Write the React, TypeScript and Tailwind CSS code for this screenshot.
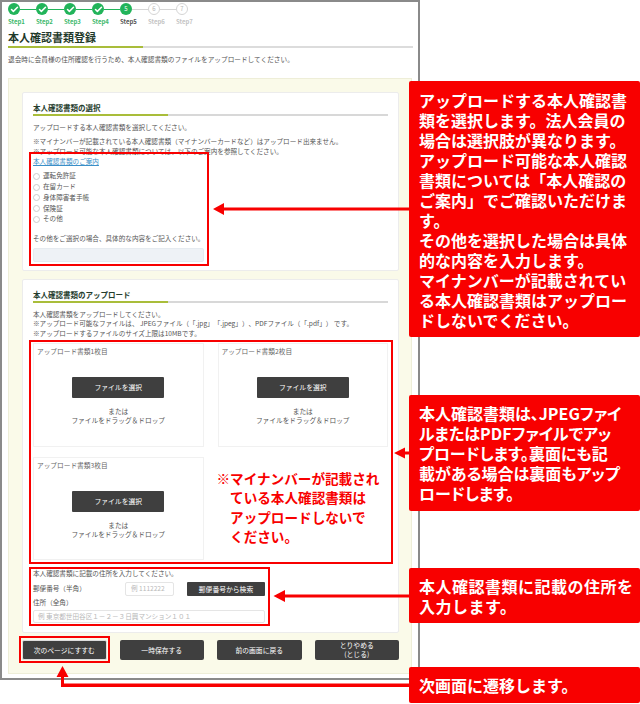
import { Check } from "lucide-react";

const steps = [1, 2, 3, 4, 5, 6, 7];
const idTypes = ["運転免許証", "在留カード", "身体障害者手帳", "保険証", "その他"];
const actions = ["次のページにすすむ", "一時保存する", "前の画面に戻る"];

const callout1 = [
  "アップロードする本人確認書",
  "類を選択します。法人会員の",
  "場合は選択肢が異なります。",
  "アップロード可能な本人確認",
  "書類については「本人確認の",
  "ご案内」でご確認いただけま",
  "す。",
  "その他を選択した場合は具体",
  "的な内容を入力します。",
  "マイナンバーが記載されてい",
  "る本人確認書類はアップロー",
  "ドしないでください。",
];

function StepCircle({ n }: { n: number }) {
  if (n < 5) {
    return (
      <div className="w-[12px] h-[12px] rounded-full bg-[#22b45a] flex items-center justify-center">
        <Check size={9} strokeWidth={4} className="text-white" />
      </div>
    );
  }
  if (n === 5) {
    return (
      <div className="w-[12px] h-[12px] rounded-full bg-[#22b45a] flex items-center justify-center text-[6px] leading-none text-white">
        5
      </div>
    );
  }
  return (
    <div className="w-[12px] h-[12px] rounded-full bg-white border border-[#d5d5d5] flex items-center justify-center text-[6px] leading-none text-[#b5b5b5]">
      {n}
    </div>
  );
}

function Stepper() {
  return (
    <div className="ml-[6px] mt-[1px]">
      <div className="flex items-center">
        {steps.map((n) => (
          <div key={n} className="flex items-center">
            <StepCircle n={n} />
            {n < 7 && <div className={n < 5 ? "w-[16px] h-px bg-[#22b45a]" : "w-[16px] h-px bg-[#d5d5d5]"} />}
          </div>
        ))}
      </div>
      <div className="flex mt-[3px]">
        {steps.map((n) => (
          <div
            key={n}
            className={
              "w-[28px] text-[6px] leading-[8px] font-bold " +
              (n < 5 ? "text-[#3cb96c]" : n === 5 ? "text-[#555555]" : "text-[#c4c4c4]")
            }
          >
            Step{n}
          </div>
        ))}
      </div>
    </div>
  );
}

function CardHeading({ children }: { children: React.ReactNode }) {
  return (
    <div>
      <div className="text-[7.5px] leading-[10px] font-bold text-[#243c2c]">{children}</div>
      <div className="mt-px flex h-[2px] bg-[#d8d8d8]">
        <div className="w-[135px] bg-[#a9bd3a]" />
      </div>
    </div>
  );
}

function UploadBox({ title, className }: { title: string; className: string }) {
  return (
    <div className={"border border-[#f1f1f1] px-[3px] pt-[2px] flex flex-col items-center " + className}>
      <div className="self-start text-[6.7px] leading-[10px] text-[#666666]">{title}</div>
      <div className="mt-[21px] w-[92px] h-[21px] bg-[#3f3f3f] rounded-[1px] flex items-center justify-center text-[6.8px] text-white">
        ファイルを選択
      </div>
      <div className="mt-[9px] text-[6.7px] leading-[9.5px] text-[#555555] text-center">
        または
        <br />
        ファイルをドラッグ＆ドロップ
      </div>
    </div>
  );
}

function Overlays() {
  return (
    <>
      <div className="absolute left-[29px] top-[152px] w-[180px] h-[114px] border-2 border-[#f80000]" />
      <div className="absolute left-[29px] top-[340px] w-[364px] h-[224px] border-2 border-[#f80000]" />
      <div className="absolute left-[29px] top-[567px] w-[241px] h-[59px] border-2 border-[#f80000]" />
      <div className="absolute left-[19px] top-[636px] w-[91px] h-[27px] border-2 border-[#f80000]" />

      <svg className="absolute left-0 top-0" width="640" height="704" viewBox="0 0 640 704">
        <g fill="#f80000">
          <path d="M213 209 L224 203 L224 207.5 L410 207.5 L410 210.5 L224 210.5 L224 215 Z" />
          <path d="M394 453 L405 447.5 L405 451.5 L410 451.5 L410 454.5 L405 454.5 L405 458.5 Z" />
          <path d="M273.500 596 L285 590 L285 594.500 L410 594.500 L410 597.500 L285 597.500 L285 602 Z" />
          <path d="M62.500 666 L68.500 677 L64 677 L64 683.500 L410 683.500 L410 687 L61 687 L61 677 L56.500 677 Z" />
        </g>
      </svg>

      <div className="absolute left-[409px] top-[81px] w-[231px] h-[256px] bg-[#f80000] rounded-[2px] pl-[10px] pt-[9px] text-[16px] leading-[20px] font-bold text-white whitespace-nowrap">
        {callout1.map((line) => (
          <div key={line}>{line}</div>
        ))}
      </div>
      <div className="absolute left-[409px] top-[395px] w-[231px] h-[116px] bg-[#f80000] rounded-[2px] pl-[10px] flex items-center text-[16px] leading-[20px] font-bold text-white whitespace-nowrap [font-feature-settings:'palt']">
        <div>
          本人確認書類は、JPEGファイ
          <br />
          ルまたはPDFファイルでアッ
          <br />
          プロードします。裏面にも記
          <br />
          載がある場合は裏面もアップ
          <br />
          ロードします。
        </div>
      </div>
      <div className="absolute left-[409px] top-[568px] w-[231px] h-[55px] bg-[#f80000] rounded-[2px] pl-[10px] flex items-center text-[16px] tracking-[0.5px] leading-[20px] font-bold text-white whitespace-nowrap">
        <div>
          本人確認書類に記載の住所を
          <br />
          入力します。
        </div>
      </div>
      <div className="absolute left-[409px] top-[667px] w-[231px] h-[36px] bg-[#f80000] rounded-[2px] pl-[10px] flex items-center text-[16px] leading-[20px] font-bold text-white whitespace-nowrap">
        次画面に遷移します。
      </div>
    </>
  );
}

export default function App() {
  return (
    <div
      className="relative w-[640px] h-[704px] bg-white overflow-hidden text-[#555555]"
      style={{ fontFamily: '"Noto Sans CJK JP", "Noto Sans", sans-serif' }}
    >
      <div className="w-[420px] h-[680px] border-2 border-[#8a8a8a]">
        <Stepper />

        <div className="ml-[6px] mr-[5px]">
          <div className="mt-[4px] text-[11px] leading-[14px] font-bold text-[#1f3a2b]">本人確認書類登録</div>
          <div className="mt-[2px] flex h-[2px] bg-[#dcdcdc]">
            <div className="w-[135px] bg-[#a9bd3a]" />
          </div>
          <div className="mt-[6px] text-[6.67px] leading-[10px]">
            退会時に会員様の住所確認を行うため、本人確認書類のファイルをアップロードしてください。
          </div>
        </div>

        <div className="ml-[6px] mt-[14px] w-[404px] border border-[#eeeed8] bg-[#fafae9] px-[13px] pt-[13px] pb-[13px] flex flex-col">
          <div className="w-[377px] h-[179px] border border-[#ececec] rounded-[2px] bg-white px-[10px] pt-[10px]">
            <CardHeading>本人確認書類の選択</CardHeading>
            <div className="mt-[6px] text-[6.6px] leading-[10px]">アップロードする本人確認書類を選択してください。</div>
            <div className="mt-[5px] text-[6.6px] leading-[9.5px] whitespace-nowrap">
              ※マイナンバーが記載されている本人確認書類（マイナンバーカードなど）はアップロード出来ません。
              <br />
              ※アップロード可能な本人確認書類については、以下のご案内を参照してください。
            </div>
            <div className="text-[6.6px] leading-[10px] text-[#3a8fc8] underline">本人確認書類のご案内</div>
            <div className="mt-[5px]">
              {idTypes.map((t) => (
                <div key={t} className="h-[10.75px] flex items-center gap-[3px] text-[6.6px]">
                  <div className="w-[7px] h-[7px] rounded-full border border-[#cccccc] bg-white" />
                  {t}
                </div>
              ))}
            </div>
            <div className="mt-[8px] text-[6.6px] leading-[10px]">その他をご選択の場合、具体的な内容をご記入ください。</div>
            <div className="mt-[5px] w-[171px] h-[14px] rounded-[2px] border border-[#e6ebf0] bg-[#eef2f6]" />
          </div>

          <div className="mt-[8px] w-[377px] h-[354px] border border-[#ececec] rounded-[2px] bg-white px-[10px] pt-[10px]">
            <CardHeading>本人確認書類のアップロード</CardHeading>
            <div className="mt-[6.5px] text-[6.6px] leading-[9.75px] whitespace-nowrap [text-spacing-trim:space-all]">
              本人確認書類をアップロードしてください。
              <br />
              ※アップロード可能なファイルは、 JPEGファイル（「.jpg」「.jpeg」）、PDFファイル（「.pdf」） です。
              <br />
              ※アップロードするファイルのサイズ上限は10MBです。
            </div>
            <div className="mt-[4px] grid grid-cols-2 gap-x-[14px] gap-y-[10px]">
              <UploadBox title="アップロード書類1枚目" className="h-[104px]" />
              <UploadBox title="アップロード書類2枚目" className="h-[104px]" />
              <UploadBox title="アップロード書類3枚目" className="h-[103px]" />
              <div className="flex pt-[12px] -ml-[1px] text-[13.6px] leading-[19.5px] font-bold text-[#f80000] whitespace-nowrap">
                <span className="w-[13.6px]">※</span>
                <div>
                  マイナンバーが記載され
                  <br />
                  ている本人確認書類は
                  <br />
                  アップロードしないで
                  <br />
                  ください。
                </div>
              </div>
            </div>
            <div className="mt-[8px] w-[232px]">
              <div className="text-[6.6px] leading-[10px]">本人確認書類に記載の住所を入力してください。</div>
              <div className="mt-[4px] flex items-center h-[14px] text-[6.6px]">
                <div className="w-[92px]">郵便番号（半角）</div>
                <div className="w-[49px] h-[14px] rounded-[2px] border border-[#e5e5e5] pl-[5px] flex items-center text-[6.6px] text-[#b8b8b8]">
                  例 1112222
                </div>
                <div className="ml-[13px] w-[78px] h-[14px] rounded-[1px] bg-[#3f3f3f] flex items-center justify-center text-[6.8px] text-white">
                  郵便番号から検索
                </div>
              </div>
              <div className="mt-px text-[6.6px] leading-[10px]">住所（全角）</div>
              <div className="mt-[3px] h-[13.5px] rounded-[2px] border border-[#e5e5e5] pl-[4px] flex items-center text-[6.6px] text-[#b8b8b8] whitespace-nowrap">
                例 東京都世田谷区１－２－３日興マンション１０１
              </div>
            </div>
          </div>

          <div className="mt-[7px] w-[377px] grid grid-cols-4 gap-x-[13px]">
            {actions.map((a, i) => (
              <div
                key={a}
                className={
                  "h-[20px] rounded-[2px] bg-[#3f3f3f] flex items-center justify-center text-[6.8px] text-white " +
                  (i === 0 ? "border border-[#dddddd]" : "")
                }
              >
                {a}
              </div>
            ))}
            <div className="h-[20px] rounded-[2px] bg-[#3f3f3f] flex items-center justify-center text-center text-[6.8px] leading-[9px] text-white">
              <div>
                とりやめる
                <br />
                (とじる)
              </div>
            </div>
          </div>
        </div>
      </div>

      <Overlays />
    </div>
  );
}
